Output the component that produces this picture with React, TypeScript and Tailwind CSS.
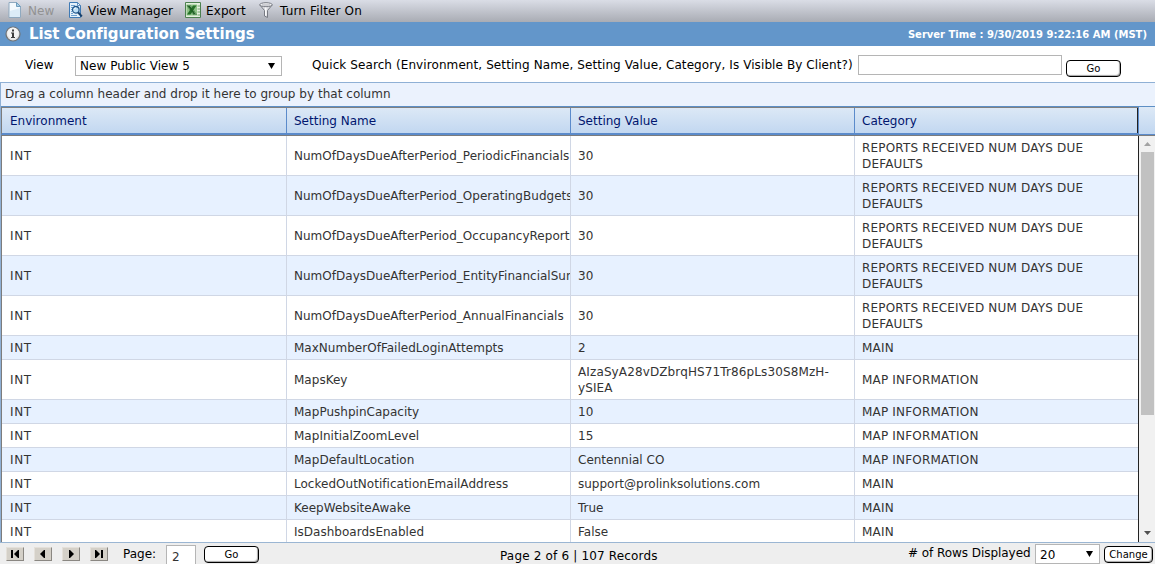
import { clsx } from "clsx";

const reportCategory = "REPORTS RECEIVED NUM DAYS DUE DEFAULTS";

const settings = [
  { name: "NumOfDaysDueAfterPeriod_PeriodicFinancials", value: "30", category: reportCategory },
  { name: "NumOfDaysDueAfterPeriod_OperatingBudgets", value: "30", category: reportCategory },
  { name: "NumOfDaysDueAfterPeriod_OccupancyReports", value: "30", category: reportCategory },
  { name: "NumOfDaysDueAfterPeriod_EntityFinancialSummary", value: "30", category: reportCategory },
  { name: "NumOfDaysDueAfterPeriod_AnnualFinancials", value: "30", category: reportCategory },
  { name: "MaxNumberOfFailedLoginAttempts", value: "2", category: "MAIN" },
  { name: "MapsKey", value: "AIzaSyA28vDZbrqHS71Tr86pLs30S8MzH-ySIEA", category: "MAP INFORMATION" },
  { name: "MapPushpinCapacity", value: "10", category: "MAP INFORMATION" },
  { name: "MapInitialZoomLevel", value: "15", category: "MAP INFORMATION" },
  { name: "MapDefaultLocation", value: "Centennial CO", category: "MAP INFORMATION" },
  { name: "LockedOutNotificationEmailAddress", value: "support@prolinksolutions.com", category: "MAIN" },
  { name: "KeepWebsiteAwake", value: "True", category: "MAIN" },
  { name: "IsDashboardsEnabled", value: "False", category: "MAIN" },
];

const columns = ["Environment", "Setting Name", "Setting Value", "Category"];

const gridCols = "grid grid-cols-[285px_284px_284px_283px]";

function NewIcon() {
  return (
    <svg width="14" height="16" viewBox="0 0 14 16">
      <path d="M1 .5h7.5l4 4v11H1z" fill="#f3f9fd" stroke="#8fa9bf" />
      <path d="M2 9l10-3v9H2z" fill="#dcecf7" />
      <path d="M8.5.5v4h4z" fill="#a9cfe6" stroke="#6f9dbd" />
    </svg>
  );
}

function ViewManagerIcon() {
  return (
    <svg width="15" height="16" viewBox="0 0 15 16">
      <path d="M1.5.5h8l3 3v12h-11z" fill="#e6f1fb" stroke="#3f7ab5" />
      <path d="M9.5.5v3h3z" fill="#fff" stroke="#3f7ab5" strokeWidth=".8" />
      <path d="M3 3.5h4M3 5.5h2M3 7.5h1M3 9.5h1M3 11.5h2M3 13.5h6" stroke="#6ea1d0" />
      <circle cx="7.8" cy="7.8" r="3.3" fill="#bfe0f7" stroke="#23588d" strokeWidth="1.3" />
      <path d="M6 7.5a2 2 0 0 1 2-1.6" stroke="#fff" fill="none" />
      <path d="M10.3 10.5l3.5 4" stroke="#17406c" strokeWidth="2" />
    </svg>
  );
}

function ExportIcon() {
  return (
    <svg width="16" height="16" viewBox="0 0 16 16">
      <path d="M.5.5h15v15H.5z" fill="#e3f0df" stroke="#4c8050" />
      <path d="M12.5 4h2.500M12.500 7h2.500M12.500 10h2.500M12.500 13h2.500" stroke="#6fa468" />
      <path d="M1.500 2.500h10.500v11H1.500z" fill="#8fc487" />
      <path d="M2 3.500h3.500l6 9H8z" fill="#f4faf2" stroke="#1f6323" strokeWidth=".6" />
      <path d="M8 3.500h3.500l-6 9H2z" fill="#257029" />
      <path d="M2.500 4h2.700l5.500 8H8.300z" fill="#1f6323" />
    </svg>
  );
}

function FilterIcon() {
  return (
    <svg width="14" height="16" viewBox="0 0 14 16">
      <path d="M.8 3l4.700 5.500v5.500l3 1.500V8.500L13.200 3z" fill="#dcdde2" stroke="#777a82" />
      <path d="M6.800 5v8.500" stroke="#fff" strokeWidth="1.300" />
      <ellipse cx="7" cy="2.700" rx="6.200" ry="2" fill="#f4f4f6" stroke="#777a82" />
      <path d="M3 3h8" stroke="#a8aab2" />
    </svg>
  );
}

function InfoIcon() {
  return (
    <svg width="16" height="16" viewBox="0 0 16 16">
      <circle cx="8" cy="8" r="7" fill="#e4e4e4" stroke="#6f7275" strokeWidth="1.200" />
      <circle cx="8" cy="7" r="5.500" fill="#f3f3f3" />
      <path d="M7 3.500h2v2H7zM6 6.500h3v4.500h1v1H6v-1h1V7.500H6z" fill="#3c3c3c" />
    </svg>
  );
}

// Windows-style caret used by both drop-downs
function Caret() {
  return (
    <svg width="7" height="6" viewBox="0 0 7 6">
      <path d="M0 0h7L3.500 6z" fill="#000" />
    </svg>
  );
}

function PagerButton({ d }: { d: string }) {
  return (
    <button className="flex h-[14px] w-[18px] items-center justify-center border border-t-[#e4e0da] border-r-[#8a8782] border-b-[#8a8782] border-l-[#e4e0da] bg-[#d4d0c8]">
      <svg width="12" height="8" viewBox="0 0 12 8">
        <path d={d} fill="#000" />
      </svg>
    </button>
  );
}

function Button({ children, className }: { children: string; className?: string }) {
  return (
    <button
      className={clsx(
        "flex h-[17px] items-center justify-center rounded-[4px] border border-black bg-white shadow-[inset_-1px_-1px_1px_#a5a5a5]",
        className,
      )}
    >
      {children}
    </button>
  );
}

function Toolbar() {
  return (
    <div className="flex h-[22px] items-center bg-linear-to-b from-[#dadde6] to-[#a9acb4] pb-[2px] pl-[8px] tracking-[0.1px]">
      <NewIcon />
      <span className="mt-px ml-[6px] w-[40px] text-[#929292]">New</span>
      <ViewManagerIcon />
      <span className="mt-px ml-[5px] w-[97px] tracking-[0.01px]">View Manager</span>
      <ExportIcon />
      <span className="mt-px ml-[5px] w-[53px]">Export</span>
      <FilterIcon />
      <span className="mt-px ml-[7px] tracking-[0.15px]">Turn Filter On</span>
    </div>
  );
}

function TitleBar() {
  return (
    <div className="flex h-[24px] items-center bg-[#6396ca] pl-[5px] pr-[8px] text-white">
      <InfoIcon />
      <h1 className="mt-px ml-[8px] text-[15px] font-bold tracking-[-0.09px]">
        List Configuration Settings
      </h1>
      <span className="mt-px ml-auto text-[10px] font-bold">Server Time : 9/30/2019 9:22:16 AM (MST)</span>
    </div>
  );
}

function SearchBar() {
  return (
    <div className="flex h-[36px] items-start pl-[25px]">
      <span className="mt-[11px] w-[50px] leading-[16px]">View</span>
      <div className="mt-[10px] flex h-[20px] w-[207px] items-center justify-between border border-[#b5b5b5] pl-[4px] pr-[6px]">
        <span className="leading-[16px] tracking-[0.04px]">New Public View 5</span>
        <Caret />
      </div>
      <span className="ml-[30px] mt-[11px] w-[546px] leading-[16px] tracking-[0.09px] whitespace-nowrap">
        Quick Search (Environment, Setting Name, Setting Value, Category, Is Visible By Client?)
      </span>
      <input className="mt-[9px] h-[20px] w-[204px] border border-[#b5b5b5]" />
      <Button className="ml-[4px] mt-[14px] w-[55px] text-[10px]">Go</Button>
    </div>
  );
}

function Scrollbar() {
  return (
    <div className="flex flex-1 flex-col items-center bg-[#f1f1f1]">
      <svg className="shrink-0" width="16" height="16" viewBox="0 0 16 16">
        <path d="M5 10h7L8.500 6z" fill="#a3a3a3" />
      </svg>
      <div className="ml-px h-[263px] w-[13px] bg-[#c1c1c1]" />
      <svg className="mt-auto shrink-0" width="16" height="17" viewBox="0 0 16 17">
        <path d="M5 6h7l-3.500 4z" fill="#505050" />
      </svg>
    </div>
  );
}

function SettingsGrid() {
  return (
    <div className="border-l border-[#8fb0d5]">
      <div className="h-[24px] border-t border-[#8fb0d5] bg-[#ebf2fd] pl-[4px] leading-[22px] tracking-[0.03px] text-[#333]">
        Drag a column header and drop it here to group by that column
      </div>
      <div className="flex h-[30px] border-t border-b border-t-[#5d8fc5] border-b-[#7c7c7c] bg-linear-to-b from-[#dde9f6] to-[#c0d6f0]">
        <div
          className={clsx(
            gridCols,
            "border-t border-b-2 border-l border-t-[#808080] border-b-[#5b8bcb] border-l-[#7c7c7c] text-[#00156e]",
          )}
        >
          {columns.map((column, i) => (
            <div
              key={column}
              className={clsx(
                "border-r pt-[2px] leading-[23px]",
                i === 0 ? "pl-[8px]" : "pl-[7px]",
                i < 3 ? "border-[#5b8bcb]" : "border-[#222]",
              )}
            >
              {column}
            </div>
          ))}
        </div>
        <div className="flex-1 border-b border-l border-[#5b8bcb]" />
      </div>
      <div className="flex h-[406px] overflow-hidden">
        <div className="border-r border-l border-r-[#222] border-l-[#7c7c7c] leading-[16px] text-[#333]">
          {settings.map((row, i) => (
            <div
              key={row.name}
              className={clsx(
                gridCols,
                "border-b border-[#d0d7e5] [&>div]:flex [&>div]:items-center [&>div]:overflow-hidden [&>div]:pt-[4px] [&>div]:pb-[3px]",
                i % 2 === 1 && "bg-[#e7f1ff]",
              )}
            >
              <div className="border-r border-[#d0d7e5] pl-[8px] tracking-[0.6px]">INT</div>
              <div className="border-r border-[#d0d7e5] pl-[7px] tracking-[0.02px]">{row.name}</div>
              <div
                className={clsx(
                  "border-r border-[#d0d7e5] pr-[8px] pl-[7px]",
                  row.name === "MapsKey" && "tracking-[0.12px]",
                )}
              >
                {row.value}
              </div>
              <div className="pr-[8px] pl-[7px] tracking-[0.19px]">{row.category}</div>
            </div>
          ))}
        </div>
        <Scrollbar />
      </div>
    </div>
  );
}

function Pager() {
  return (
    <div className="grid h-[22px] grid-cols-[500px_1fr_auto] overflow-hidden border-t border-[#9bb6d3] bg-[#eee]">
      <div className="flex items-start pl-[6px]">
        <div className="mt-[4px] flex gap-[10px]">
          <PagerButton d="M2 0h2v8H2zM10 0v8H9L5 4l4-4z" />
          <PagerButton d="M8 0v8H7L3 4l4-4z" />
          <PagerButton d="M4 0v8h1l4-4-4-4z" />
          <PagerButton d="M8 0h2v8H8zM2 0v8h1l4-4-4-4z" />
        </div>
        <span className="ml-[15px] mt-[3px] w-[43px] leading-[16px]">Page:</span>
        <div className="mt-[2px] h-[24px] w-[30px] border border-[#b5b5b5] bg-white pl-[5px] leading-[22px] text-[#333]">
          2
        </div>
        <Button className="ml-[8px] mt-[3px] w-[55px] text-[10px]">Go</Button>
      </div>
      <span className="mt-[5px] leading-[16px] tracking-[0.17px]">Page 2 of 6 | 107 Records</span>
      <div className="flex items-start pr-[2px]">
        <span className="mt-[2px] w-[127px] leading-[16px] tracking-[-0.05px]"># of Rows Displayed</span>
        <div className="mt-[1px] flex h-[20px] w-[65px] items-center justify-between border border-[#b5b5b5] bg-white pl-[4px] pr-[6px]">
          <span className="mt-px">20</span>
          <Caret />
        </div>
        <Button className="ml-[4px] mt-[3px] w-[49px] text-[10px]">Change</Button>
      </div>
    </div>
  );
}

export default function App() {
  return (
    <div className="h-[564px] w-[1155px] overflow-hidden bg-white font-['DejaVu_Sans',Verdana,sans-serif] text-[12px] text-black">
      <Toolbar />
      <TitleBar />
      <SearchBar />
      <SettingsGrid />
      <Pager />
    </div>
  );
}
